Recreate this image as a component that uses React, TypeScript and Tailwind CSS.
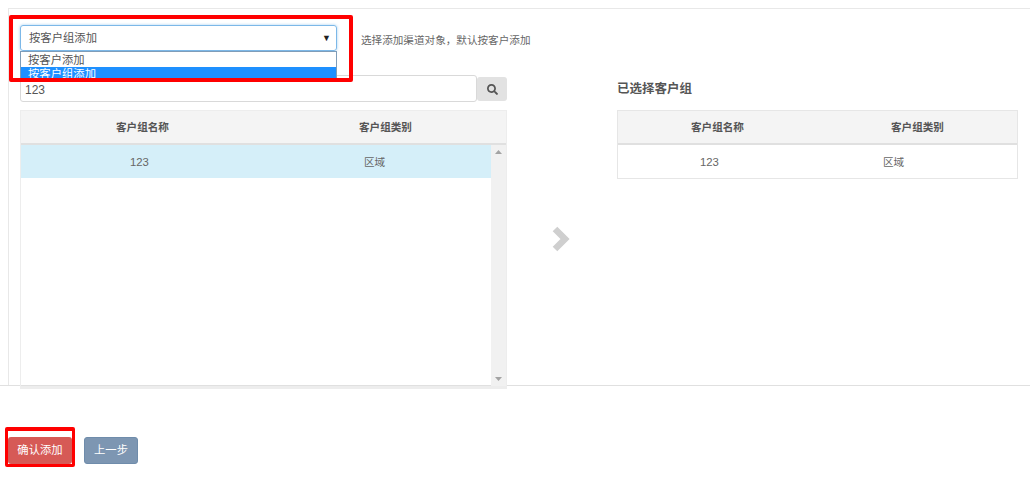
import { FaSearch } from "react-icons/fa";

const font = "font-['Liberation_Sans','Noto_Sans_CJK_SC',sans-serif]";

function HeaderCells({ first, second }: { first: string; second: string }) {
  return (
    <div className="flex h-[34px] items-center border-b-2 border-[#e0e0e0] bg-[#f4f4f4] pt-[2px] text-[10.6px] font-bold text-[#555]">
      <span className={first}>客户组名称</span>
      <span className={second}>客户组类别</span>
    </div>
  );
}

export default function App() {
  return (
    <div className={`relative h-[480px] w-[1033px] overflow-hidden bg-white ${font}`}>
      <div className="w-[1030px]">
        {/* main panel */}
        <div className="ml-2 mt-2 h-[377px] border-l border-t border-[#e8e8e8] pl-[11px] pt-[16px]">
          <div className="flex h-[26px] items-center">
            <div className="flex h-[26px] w-[317px] items-center justify-between rounded-[3px] border border-[#7cb8e8] pl-2 pr-[5px] pt-px text-[11.33px] text-[#555] shadow-[0_0_3px_rgba(102,175,233,0.6)]">
              <span>按客户组添加</span>
              <span className="text-[9px] text-[#222]">▼</span>
            </div>
            <span className="ml-6 mt-[5px] text-[10.6px] text-[#666]">选择添加渠道对象，默认按客户添加</span>
          </div>

          <div className="flex">
            <div className="w-[487px]">
              <div className="mt-6 flex h-[27px]">
                <div className="flex w-[457px] items-center rounded-[3px] border border-[#d9d9d9] pl-1 pt-[2px] text-[12px] text-[#555]">123</div>
                <div className="mt-[2px] flex h-[24px] w-[30px] items-center justify-center rounded-[3px] bg-[#e2e2e2]">
                  <FaSearch size={11} className="text-[#555]" />
                </div>
              </div>

              <div className="mt-2 h-[279px] border border-b-[3px] border-[#ededed]">
                <HeaderCells first="ml-[95px]" second="ml-[190px]" />
                <div className="flex h-[241px]">
                  <div className="flex-1">
                    <div className="flex h-[33px] items-center bg-[#d5eff9] pt-[2px] text-[10.6px] text-[#666]">
                      <span className="ml-[109px] text-[11.33px]">123</span>
                      <span className="ml-[215px]">区域</span>
                    </div>
                  </div>
                  <div className="flex w-[15px] flex-col items-center justify-between bg-[#f1f1f1] py-[5px] text-[#a3a3a3]">
                    <svg width="7" height="4" viewBox="0 0 7 4"><path d="M3.5 0L7 4H0z" fill="currentColor" /></svg>
                    <svg width="7" height="4" viewBox="0 0 7 4"><path d="M0 0h7L3.5 4z" fill="currentColor" /></svg>
                  </div>
                </div>
              </div>
            </div>

            <div className="flex w-[110px] justify-center pr-[3px] pt-[175px]">
              <svg width="19" height="26" viewBox="0 0 19 26" className="shrink-0">
                <path d="M4 3L14 13L4 23" fill="none" stroke="#cfcfcf" strokeWidth="6.5" />
              </svg>
            </div>

            <div className="w-[401px]">
              <div className="mt-[30px] text-[12.5px] font-bold leading-[16px] text-[#555]">已选择客户组</div>
              <div className="mt-[13px] border border-[#e6e6e6]">
                <HeaderCells first="ml-[73px]" second="ml-[147px]" />
                <div className="flex h-[33px] items-center pt-[2px] text-[10.6px] text-[#666]">
                  <span className="ml-[82px] text-[11.33px]">123</span>
                  <span className="ml-[164px]">区域</span>
                </div>
              </div>
            </div>
          </div>
        </div>

        {/* footer */}
        <div className="flex items-start gap-[12px] border-t border-[#e0e0e0] pl-2 pt-[51px]">
          <button className="flex h-[27px] w-[64px] items-center justify-center rounded-[3px] bg-[#d65a56] text-[11.33px] text-white">确认添加</button>
          <button className="flex h-[27px] w-[54px] items-center justify-center rounded-[3px] border border-[#6f8cab] bg-[#7d96b2] text-[11.33px] text-white">上一步</button>
        </div>
      </div>

      {/* open select list */}
      <div className="absolute left-[20px] top-[51px] h-[29px] w-[317px] border border-[#7f9db9] bg-white text-[11.33px] leading-[14px] text-[#555]">
        <div className="h-[15px] pl-[7px] pt-px">按客户添加</div>
        <div className="h-[13px] bg-[#1e90ff] pl-[7px] text-white">按客户组添加</div>
      </div>

      {/* red annotation boxes */}
      <div className="absolute left-[9px] top-[15px] h-[67px] w-[344px] rounded-[2px] border-[4px] border-[#f00]" />
      <div className="absolute left-[5px] top-[427px] h-[40px] w-[70px] rounded-[2px] border-[3px] border-t-[4px] border-[#f00]" />
    </div>
  );
}
